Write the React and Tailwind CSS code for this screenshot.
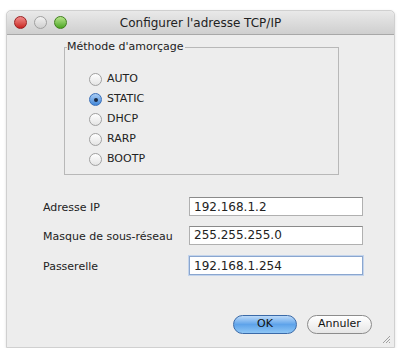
import React from "react";

const font = { fontFamily: '"Lucida Grande", "DejaVu Sans", "Liberation Sans", sans-serif' };

function Light({ cls }) {
  return <span className={`block w-[13px] h-[13px] rounded-full ${cls}`} />;
}

function Radio({ label, checked }) {
  return (
    <div className="flex items-center h-[20px]">
      {checked ? (
        <span className="w-[13px] h-[13px] rounded-full border border-[#3a6fb8] bg-gradient-to-b from-[#a9cdf5] to-[#3f86d8] flex items-center justify-center">
          <span className="w-[4px] h-[4px] rounded-full bg-[#1a2a44]" />
        </span>
      ) : (
        <span className="w-[13px] h-[13px] rounded-full border border-[#a0a0a0] bg-gradient-to-b from-white to-[#e4e4e4]" />
      )}
      <span className="ml-[5px] text-[11px] text-[#222]">{label}</span>
    </div>
  );
}

function Field({ label, value, focused, mt }) {
  return (
    <div className={`flex items-center ${mt}`}>
      <span className="w-[146px] text-[11px] text-[#222] pl-[36px] pt-[3px] box-content shrink-0">{label}</span>
      <div
        className={`w-[174px] h-[19px] bg-white flex items-center pl-[4px] text-[12px] text-[#222] border ${
          focused ? "border-[#8aa6cf] shadow-[0_0_0_1px_#c3d4ec]" : "border-[#b0b0b0] border-t-[#8a8a8a]"
        }`}
      >
        {value}
      </div>
    </div>
  );
}

export default function App() {
  return (
    <div className="w-[401px] h-[348px] bg-white overflow-hidden" style={font}>
      <div className="ml-[6px] mt-[10px] w-[389px] h-[338px] bg-[#ededed] border border-[#d0d0d0] rounded-t-[5px] flex flex-col shadow-[0_1px_3px_rgba(0,0,0,0.12)]">
        <div className="h-[24px] shrink-0 flex items-center rounded-t-[5px] bg-gradient-to-b from-[#e9e9e9] to-[#cfcfcf] border-b border-[#a8a8a8]">
          <div className="flex items-center gap-[7px] pl-[7px] w-[70px]">
            <Light cls="bg-gradient-to-b from-[#f08a8a] to-[#c81e1e] border border-[#9a2020]" />
            <Light cls="bg-gradient-to-b from-[#f2f2f2] to-[#cfcfcf] border border-[#a0a0a0]" />
            <Light cls="bg-gradient-to-b from-[#b6e58a] to-[#4aa61c] border border-[#3f7f1c]" />
          </div>
          <div className="flex-1 text-center text-[12px] text-[#222]">Configurer l'adresse TCP/IP</div>
          <div className="w-[70px]" />
        </div>

        <fieldset className="ml-[57px] mt-[4px] w-[275px] h-[136px] border border-[#b8b8b8] px-[24px] pt-[14px]">
          <legend className="ml-[-22px] text-[11px] text-[#222] pl-0 pr-[1px]">Méthode d'amorçage</legend>
          <Radio label="AUTO" />
          <Radio label="STATIC" checked />
          <Radio label="DHCP" />
          <Radio label="RARP" />
          <Radio label="BOOTP" />
        </fieldset>

        <Field label="Adresse IP" value="192.168.1.2" mt="mt-[22px]" />
        <Field label="Masque de sous-réseau" value="255.255.255.0" mt="mt-[9px]" />
        <Field label="Passerelle" value="192.168.1.254" focused mt="mt-[11px]" />

        <div className="flex justify-end gap-[10px] pr-[22px] mt-[39px]">
          <button className="w-[64px] h-[19px] rounded-full border border-[#3b6aa8] bg-gradient-to-b from-[#bcdaf8] via-[#5ea3ea] to-[#8ec6f5] text-[11px] text-[#111]">
            OK
          </button>
          <button className="w-[65px] h-[19px] rounded-full border border-[#8c8c8c] bg-gradient-to-b from-white to-[#e6e6e6] text-[11px] text-[#111]">
            Annuler
          </button>
        </div>
        <div className="flex justify-end pr-[3px] mt-auto mb-[3px]">
          <svg width="9" height="9" viewBox="0 0 9 9">
            <path d="M8 1 L1 8 M8 4 L4 8 M8 7 L7 8" stroke="#a0a0a0" strokeWidth="1" />
          </svg>
        </div>
      </div>
    </div>
  );
}
